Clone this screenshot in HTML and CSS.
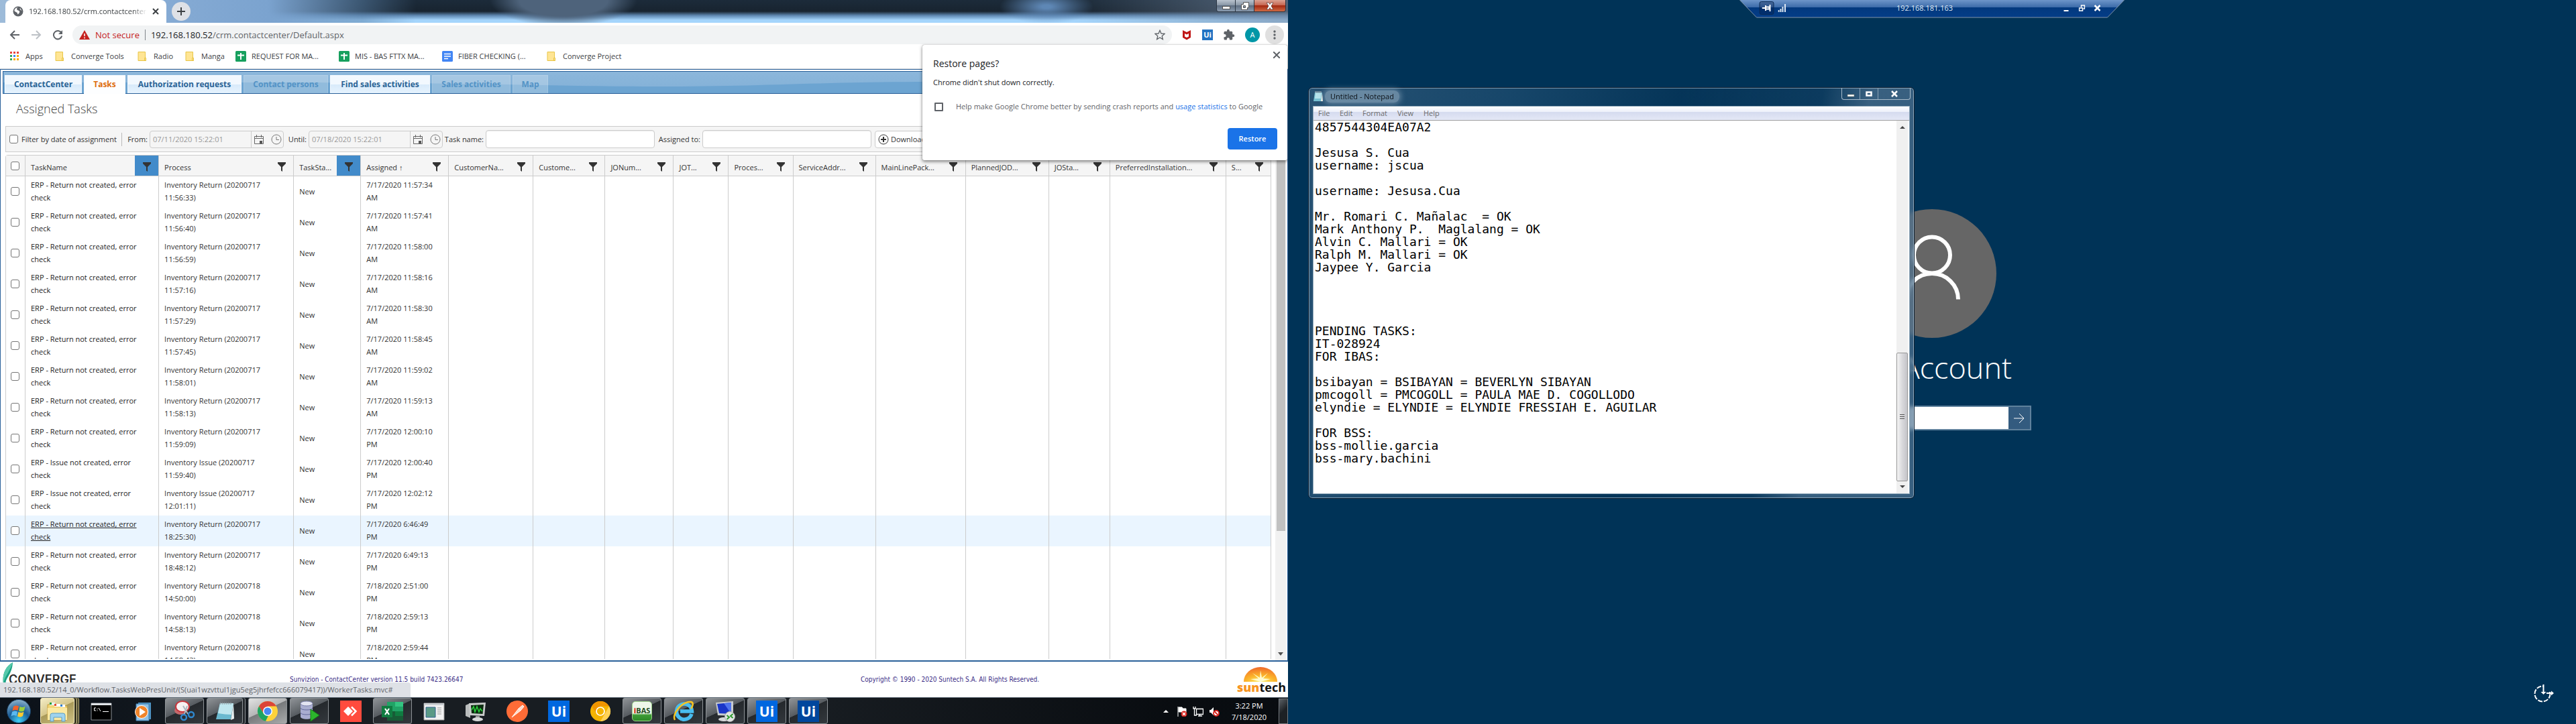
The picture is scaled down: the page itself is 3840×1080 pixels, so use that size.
FILE: index.html
```html
<!DOCTYPE html>
<html lang="en">
<head>
<meta charset="utf-8">
<title>Desktop</title>
<link rel="stylesheet" href="styles.css">
</head>
<body>
<svg class="sprite" aria-hidden="true">
  <symbol id="funnel" viewBox="0 0 12 14"><path d="M0 0h12v2L7 7v7l-2-1.500V7L0 2z" fill="#333"/></symbol>
  <symbol id="calendar" viewBox="0 0 16 16"><path d="M1.500 3.500h13v11h-13zM1 6.500h14M4.500 1v4M11.500 1v4" fill="none" stroke="#666"/><path d="M9 10h4v4H9z" fill="#555"/></symbol>
  <symbol id="clock" viewBox="0 0 16 16"><circle cx="8" cy="8" r="7" fill="none" stroke="#777"/><path d="M8 4v4.500h4" fill="none" stroke="#777"/></symbol>
  <symbol id="folder" viewBox="0 0 16 16"><path d="M1 1.500h10.500v9h1v4H1z" fill="#ffe594" stroke="#e8c547"/><path d="M10.500 14v-3.500h2V14z" fill="#ffe594" stroke="#e8c547"/></symbol>
  <symbol id="sheet" viewBox="0 0 16 16"><rect width="16" height="16" rx="1.500" fill="#17a05e"/><path d="M8 3v10M3 6.500h10" stroke="#fff" stroke-width="2"/></symbol>
</svg>

<main class="desktop">
  <section class="screen" aria-label="Browser">
    <div class="browser">
      <div class="tabstrip">
        <div class="browser-tab">
          <svg class="i16" viewBox="0 0 16 16"><circle cx="8" cy="8" r="7.500" fill="#5f6368"/><path d="M8 2c-3 1-2 4 0 4.500s3 2 1.500 4S7 13 7 11 3 9 2.500 7 5 2 8 2zM11 3c-1 1 0 3 2.500 4" fill="#fff"/></svg>
          <span class="browser-tab-title">192.168.180.52/crm.contactcenter</span>
          <button class="plain" aria-label="Close tab"><svg class="i10" viewBox="0 0 10 10"><path d="M1 1l8 8M9 1L1 9" stroke="#3c4043" stroke-width="2"/></svg></button>
        </div>
        <button class="newtab" aria-label="New tab"><svg class="i12" viewBox="0 0 12 12"><path d="M6 0v12M0 6h12" stroke="#3c4043" stroke-width="2"/></svg></button>
        <div class="winbtns">
          <button class="wb" aria-label="Minimize"><svg viewBox="0 0 14 12"><rect x="1.500" y="6.500" width="11" height="4" fill="#fff" stroke="#555"/></svg></button>
          <button class="wb" aria-label="Restore"><svg viewBox="0 0 14 12"><path d="M4.500.500h8v8h-2v3h-9v-8h3z" fill="#fff" stroke="#555"/><path d="M4.500 5.500h3v3h-3z" fill="#8297ad" stroke="#555"/></svg></button>
          <button class="wb wb-close" aria-label="Close"><svg viewBox="0 0 14 12"><path d="M2 1h3.500L7 3.500 8.500 1H12L9 6l3 5H8.500L7 8.500 5.500 11H2l3-5z" fill="#fff" stroke="#533" stroke-width=".7"/></svg></button>
        </div>
      </div>

      <div class="navbar">
        <button class="plain nav" aria-label="Back"><svg class="i16" viewBox="0 0 16 16"><path d="M15 8H2M8 2L2 8l6 6" fill="none" stroke="#5f6368" stroke-width="2"/></svg></button>
        <button class="plain nav" aria-label="Forward"><svg class="i16" viewBox="0 0 16 16"><path d="M1 8h13M8 2l6 6-6 6" fill="none" stroke="#bdc1c6" stroke-width="2"/></svg></button>
        <button class="plain nav" aria-label="Reload"><svg class="i16" viewBox="0 0 16 16"><path d="M13.500 5A6.200 6.200 0 1 0 14.200 9.500" fill="none" stroke="#5f6368" stroke-width="2"/><path d="M15 1v6H9z" fill="#5f6368"/></svg></button>
        <div class="omnibox">
          <svg class="i16" viewBox="0 0 16 16"><path d="M8 1l8 14H0z" fill="#c5221f"/><path d="M8 6v4M8 11.500v2" stroke="#fff" stroke-width="1.500"/></svg>
          <span class="insecure">Not secure</span>
          <span class="url">192.168.180.52<span class="path">/crm.contactcenter/Default.aspx</span></span>
          <button class="plain star" aria-label="Bookmark"><svg class="i16" viewBox="0 0 24 24"><path d="M12 2l3 7 7.500.600-5.700 5 1.700 7.400-6.500-4-6.500 4 1.700-7.400-5.700-5L9 9z" fill="none" stroke="#5f6368" stroke-width="2"/></svg></button>
        </div>
        <div class="extensions">
          <svg class="i16" viewBox="0 0 16 16"><path d="M2 1l6 3 6-3v11l-6 3.500L2 12zM5 6v4.500L8 12l3-1.500V6L8 7.500z" fill="#c01818" fill-rule="evenodd"/></svg>
          <span class="ui-small">Ui</span>
          <svg class="i18" viewBox="0 0 24 24"><path d="M20.500 11H19V7a2 2 0 0 0-2-2h-4V3.500a2.500 2.500 0 0 0-5 0V5H4a2 2 0 0 0-2 2v3.800h1.500a2.700 2.700 0 0 1 0 5.400H2V20a2 2 0 0 0 2 2h3.800v-1.500a2.700 2.700 0 0 1 5.400 0V22H17a2 2 0 0 0 2-2v-4h1.500a2.500 2.500 0 0 0 0-5z" fill="#5f6368"/></svg>
          <span class="profile">A</span>
        </div>
        <button class="menu" aria-label="Menu"><svg class="i16" viewBox="0 0 16 16"><g fill="#5f6368"><circle cx="8" cy="3" r="1.700"/><circle cx="8" cy="8" r="1.700"/><circle cx="8" cy="13" r="1.700"/></g></svg></button>
      </div>

      <nav class="bookmarks">
        <a href="#"><svg class="i16" viewBox="0 0 16 16"><g><path d="M1 1h3v3H1z M6 1h3v3H6zM11 1h3v3h-3z" fill="#e8453c"/><path d="M1 6h3v3H1zM1 11h3v3H1z" fill="#34a853"/><path d="M6 6h3v3H6z" fill="#4285f4"/><path d="M11 6h3v3h-3zM6 11h3v3H6zM11 11h3v3h-3z" fill="#f9ab00"/></g></svg>Apps</a>
        <a href="#"><svg class="i16"><use href="#folder"/></svg>Converge Tools</a>
        <a href="#"><svg class="i16"><use href="#folder"/></svg>Radio</a>
        <a href="#"><svg class="i16"><use href="#folder"/></svg>Manga</a>
        <a href="#"><svg class="i16"><use href="#sheet"/></svg>REQUEST FOR MA...</a>
        <a href="#"><svg class="i16"><use href="#sheet"/></svg>MIS - BAS FTTX MA...</a>
        <a href="#"><svg class="i16" viewBox="0 0 16 16"><rect width="16" height="16" rx="1.500" fill="#4285f4"/><path d="M3 4.500h10M3 8h10M3 11.500h6" stroke="#fff" stroke-width="1.700"/></svg>FIBER CHECKING (...</a>
        <a href="#"><svg class="i16"><use href="#folder"/></svg>Converge Project</a>
      </nav>

      <div class="crm">
        <nav class="crm-tabs">
          <svg class="wave" viewBox="0 0 1910 32" preserveAspectRatio="none"><path d="M0 16h400c300 0 420 6 580 6S1200 15 1400 15h510v17H0z" fill="#6ca4d1"/></svg>
          <a href="#" class="crm-tab">ContactCenter</a>
          <a href="#" class="crm-tab active">Tasks</a>
          <a href="#" class="crm-tab">Authorization requests</a>
          <a href="#" class="crm-tab off">Contact persons</a>
          <a href="#" class="crm-tab">Find sales activities</a>
          <a href="#" class="crm-tab off">Sales activities</a>
          <a href="#" class="crm-tab off">Map</a>
        </nav>
        <div class="crm-body">
          <div class="crm-content">
            <h1>Assigned Tasks</h1>
            <form class="filters">
              <div class="bydate"><input type="checkbox" class="cb" id="bydate"><label for="bydate">Filter by date of assignment</label></div>
              <label for="from">From:</label>
              <div class="datebox"><input id="from" type="text" value="07/11/2020 15:22:01" disabled><span><svg class="i16"><use href="#calendar"/></svg><svg class="i16"><use href="#clock"/></svg></span></div>
              <label for="until">Until:</label>
              <div class="datebox"><input id="until" type="text" value="07/18/2020 15:22:01" disabled><span><svg class="i16"><use href="#calendar"/></svg><svg class="i16"><use href="#clock"/></svg></span></div>
              <label for="taskname">Task name:</label>
              <input class="textbox" id="taskname" type="text">
              <label for="assignee">Assigned to:</label>
              <input class="textbox" id="assignee" type="text">
              <button type="button" class="download"><svg class="i16" viewBox="0 0 16 16"><circle cx="8" cy="8" r="7" fill="none" stroke="#333"/><path d="M8 4v8M4 8h8" stroke="#333" stroke-width="2"/></svg>Download</button>
            </form>
            <div class="grid-wrap">
              <table class="grid">
                <colgroup><col class="c-check"><col class="c-task"><col class="c-process"><col class="c-state"><col class="c-assigned"><col class="c-customer"><col class="c-custno"><col class="c-jonum"><col class="c-jot"><col class="c-proc"><col class="c-addr"><col class="c-pack"><col class="c-planned"><col class="c-josta"><col class="c-pref"><col class="c-s"></colgroup>
                <thead><tr id="head"></tr></thead>
                <tbody id="rows"></tbody>
              </table>
            </div>
          </div>
          <div class="page-scroll"><div class="page-thumb"></div><svg viewBox="0 0 10 6"><path d="M1 0h8L5 5z" fill="#505050"/></svg></div>
        </div>
      </div>

      <footer class="crm-footer">
        <div class="converge"><svg viewBox="0 0 17 34"><path d="M17 0C6 6 1 18 3 32l4 2C4 24 16 20 17 0z" fill="#1aa184"/><path d="M17 0C6 6 1 18 3 32 5 20 14 12 17 0z" fill="#56c9ab"/></svg><span>CONVERGE</span></div>
        <p class="version">Sunvizion - ContactCenter version 11.5 build 7423.26647</p>
        <p class="copyright">Copyright © 1990 - 2020 Suntech S.A. All Rights Reserved.</p>
        <div class="suntech">
          <svg viewBox="0 0 50 22"><defs><radialGradient id="sun" cx=".5" cy="1" r="1"><stop offset="0" stop-color="#fff36b"/><stop offset=".45" stop-color="#fbb12a"/><stop offset="1" stop-color="#f0682a"/></radialGradient></defs><path d="M0 22a25 22 0 0 1 50 0z" fill="url(#sun)"/><path d="M25 22L10 18l12-1-9-8 11 7 1-11 2 11 9-7-7 8 11 1z" fill="#fffbd0"/></svg>
          <span><b>sun</b>tech</span>
        </div>
        <div class="status">192.168.180.52/14_0/Workflow.TasksWebPresUnit/(S(uai1wzvttul1jgu5eg5jhrfefcc666079417))/WorkerTasks.mvc#</div>
      </footer>

      <div class="restore" role="dialog" aria-labelledby="restore-title">
        <button class="plain restore-close" aria-label="Dismiss"><svg class="i10" viewBox="0 0 10 10"><path d="M0 0l10 10M10 0L0 10" stroke="#5f6368" stroke-width="2"/></svg></button>
        <h2 id="restore-title">Restore pages?</h2>
        <p>Chrome didn't shut down correctly.</p>
        <div class="consent"><input type="checkbox" id="crash" class="cb square"><label for="crash">Help make Google Chrome better by sending crash reports and <a href="#">usage statistics</a> to Google</label></div>
        <button class="restore-btn">Restore</button>
      </div>
    </div>

    <div class="taskbar">
      <button class="start" aria-label="Start"><svg viewBox="0 0 36 36"><defs><radialGradient id="orb" cx=".5" cy=".9" r=".9"><stop offset="0" stop-color="#3fd0f5"/><stop offset=".5" stop-color="#1a5d97"/><stop offset="1" stop-color="#8fb3cc"/></radialGradient></defs><circle cx="18" cy="18" r="17.500" fill="url(#orb)" stroke="#173a5c"/><path d="M10 11c3-2 5-2 8-.5L16.500 17c-3-1.500-5-1.500-8 .500z" fill="#f2622a"/><path d="M19.500 11c3 1.500 5 1.500 8-.5L26 17c-3 2-5 2-8 .5z" fill="#9bcf3c"/><path d="M8 19c3-2 5-2 8-.5L14.500 25c-3-1.500-5-1.500-8 .5z" fill="#5cb8ee"/><path d="M17.500 19c3 1.500 5 1.500 8-.5L24 25c-3 2-5 2-8 .5z" fill="#ffc931"/></svg></button>
      <button class="app open gold stacked" aria-label="Explorer"><svg viewBox="0 0 32 32"><path d="M1 6h10l2 2h17v21H1z" fill="#f3d677" stroke="#c9a23c"/><path d="M4 3h8v4H4z" fill="#e9f3fa"/><path d="M4 3h3v3H4z" fill="#21a038"/><path d="M11 5h9v4h-9z" fill="#fff"/><path d="M11 5h3v3h-3z" fill="#e0482e"/><path d="M20 6h7v4h-7z" fill="#fff"/><path d="M20 6h3v3h-3z" fill="#2f7fd0"/><path d="M1 11h29v18H1z" fill="#fbe9a2"/><path d="M5 31V22q0-3 3-3h16q3 0 3 3v9h-5v-6H10v6z" fill="#9fd3ee" stroke="#5a9ec4"/></svg></button>
      <button class="app" aria-label="Command Prompt"><svg viewBox="0 0 32 32"><path d="M1 4h30v25H1z" fill="#000" stroke="#8a8f94"/><path d="M1 4h30v3H1z" fill="#dfe3e6"/><path d="M8 11H5.500v4H8M10 12v1M10 14.500v1M12 11l3 5M18 16.500h9" fill="none" stroke="#fff"/></svg></button>
      <button class="app" aria-label="Media Player"><svg viewBox="0 0 32 32"><path d="M9 3h19v25H9z" fill="#4e93c4"/><path d="M6 5h19v25H6z" fill="#8fc1e6" stroke="#3c7cae"/><circle cx="14" cy="17" r="9.500" fill="#f0842a" stroke="#fff"/><path d="M11 11l9 6-9 6z" fill="#fff"/></svg></button>
      <button class="app open" aria-label="Snipping Tool"><svg viewBox="0 0 32 32"><ellipse cx="10" cy="15" rx="9" ry="6" fill="#c5686b"/><ellipse cx="13" cy="9" rx="10" ry="8" fill="#f7f2f2" stroke="#c9353c" stroke-width="2"/><path d="M14 8l7 12M20 8l-4 12" stroke="#aeb8c0" stroke-width="2"/><circle cx="15" cy="25" r="4" fill="none" stroke="#2f88cf" stroke-width="2.500"/><circle cx="26" cy="21" r="4" fill="none" stroke="#2f88cf" stroke-width="2.500"/></svg></button>
      <button class="app open stacked2" aria-label="Notepad"><svg viewBox="0 0 32 32"><path d="M9 4h20l-4 24H3z" fill="#6bb9cf"/><path d="M9 4h20l-3 17q-9 0-20-2z" fill="#bfe6ee"/><path d="M29 5l1 22-5 2z" fill="#e8efef"/><path d="M10 2v4M13 2v4M16 2v4M19 2v4M22 2v4M25 2v4" stroke="#8a969b"/></svg></button>
      <button class="app open bright" aria-label="Chrome"><svg viewBox="0 0 32 32"><circle cx="16" cy="16" r="15" fill="#fdd23a"/><path d="M3 8.500a15 15 0 0 1 26 0H16l-6 11z" fill="#db4437"/><path d="M3 8.500l7 11 7 3-4 8.300A15 15 0 0 1 3 8.500z" fill="#1da462"/><circle cx="16" cy="16" r="7" fill="#fff"/><circle cx="16" cy="16" r="5.500" fill="#4688f1"/></svg></button>
      <button class="app open" aria-label="Database"><svg viewBox="0 0 32 32"><path d="M3 4v20c0 5 18 5 18 0V4z" fill="#a9add0"/><ellipse cx="12" cy="4.500" rx="9" ry="3.500" fill="#e3e4f2" stroke="#7b80ab"/><path d="M3 11c0 4 18 4 18 0M3 18c0 4 18 4 18 0" fill="none" stroke="#63689a"/><path d="M18 13l13 9-13 9z" fill="#2cb52c" stroke="#157a15"/></svg></button>
      <button class="app" aria-label="AnyDesk"><svg viewBox="0 0 32 32"><path d="M0 0h32v32H0z" fill="#ff4b3e"/><path d="M12 9l7 7-7 7-7-7z" fill="#fff"/><path d="M17 9.500l6.500 6.500-6.500 6.500" fill="none" stroke="#fff" stroke-width="2.500"/></svg></button>
      <button class="app open" aria-label="Excel"><svg viewBox="0 0 32 32"><path d="M8 2h12v14H8z" fill="#21a366"/><path d="M20 2h12v7H20z" fill="#33c481"/><path d="M20 9h12v7H20z" fill="#21a366"/><path d="M8 16h12v14H8z" fill="#185c37"/><path d="M20 16h12v7H20z" fill="#107c41"/><path d="M20 23h12v7H20z" fill="#185c37"/><path d="M0 8h16v17H0z" fill="#107c41"/><path d="M5 12l6 9M11 12l-6 9" stroke="#fff" stroke-width="2.200"/></svg></button>
      <button class="app" aria-label="Window"><svg viewBox="0 0 32 32"><path d="M1 4h30v25H1z" fill="#f2f2f2" stroke="#999"/><path d="M1 4h30v3H1z" fill="#c9ced2"/><path d="M4 10h14v15H4z" fill="#5a9a86" stroke="#30608f"/><path d="M21 11h6M21 14h6M21 17h6M21 20h6" stroke="#999"/></svg></button>
      <button class="app" aria-label="System monitor"><svg viewBox="0 0 32 32"><path d="M1 7l7-3v22l-7-3z" fill="#b9bcbc"/><path d="M6 4l25-1-2 20-22-1z" fill="#c9cbcb"/><path d="M9 7l19-1-1.500 14L10 19z" fill="#0c2c10"/><path d="M10 14l3-5 2 8 3-8 3 8 2-5 3 4" fill="none" stroke="#2ad13b" stroke-width="1.500"/><path d="M16 23h6v4h-6z" fill="#999"/><ellipse cx="19" cy="28" rx="8" ry="3" fill="#d6d8d8"/></svg></button>
      <button class="app" aria-label="Postman"><svg viewBox="0 0 32 32"><circle cx="16" cy="16" r="16" fill="#ff6c37"/><path d="M8 25l10-13 3 3zM18 12l6-5 2 2-5 6z" fill="#ffd9c9" stroke="#fff"/></svg></button>
      <button class="app" aria-label="UiPath"><span class="ui-logo">Ui</span></button>
      <button class="app" aria-label="Canary"><svg viewBox="0 0 32 32"><circle cx="16" cy="16" r="15" fill="#f4b400"/><path d="M3 8.500a15 15 0 0 1 26 0H16l-6 11z" fill="#ef9400"/><path d="M16 31l7-12 6-10.500A15 15 0 0 1 16 31z" fill="#ffd257"/><circle cx="16" cy="16" r="6" fill="#f4b400" stroke="#fff" stroke-width="1.700"/></svg></button>
      <button class="app open" aria-label="iBAS"><span class="ibas"><b>i</b>BAS</span></button>
      <button class="app open" aria-label="Internet Explorer"><svg viewBox="0 0 32 32"><path d="M28 20A11.500 11.500 0 1 1 28.500 16H11" fill="none" stroke="#48bdf0" stroke-width="5.500"/><path d="M3 29C-2 20 14 1 27 2c5 1 2 8 0 10" fill="none" stroke="#f8c421" stroke-width="2.500"/></svg></button>
      <button class="app open" aria-label="Remote Desktop"><svg viewBox="0 0 32 32"><path d="M2 3l26-2v22L5 22z" fill="#c9cccf"/><path d="M4 5l21-2v17L7 19z" fill="#1a36c8"/><path d="M14 4l11-1v17z" fill="#4f74ee"/><ellipse cx="14" cy="28" rx="8" ry="3" fill="#d6d8da"/><circle cx="23" cy="24" r="7.500" fill="#e2e5e5" stroke="#aaa"/><path d="M18.500 22l3.500 3-3.500 3M27.500 20l-3.500 3 3.500 3" fill="none" stroke="#2c9b2c" stroke-width="2"/></svg></button>
      <button class="app open" aria-label="UiPath Studio"><span class="ui-logo">Ui</span></button>
      <button class="app open" aria-label="UiPath Robot"><span class="ui-logo dark">Ui</span></button>
      <div class="tray">
        <svg viewBox="0 0 16 16"><path d="M4 10h8L8 6z" fill="#fff"/></svg>
        <svg viewBox="0 0 16 16"><path d="M2 1v15M3 2h5l1 2h5v6H8L7 9H3z" stroke="#fff" fill="#fff"/><circle cx="11" cy="12" r="4.500" fill="#d8221c"/><path d="M9 10l4 4M13 10l-4 4" stroke="#fff" stroke-width="1.500"/></svg>
        <svg viewBox="0 0 16 16"><path d="M5.500 4.500h10v8h-10zM8 15h6M10.500 12v3M1 1v3h3V1M2.500 4v10H6" fill="none" stroke="#fff" stroke-width="1.300"/></svg>
        <svg viewBox="0 0 16 16"><path d="M1 6h2l4-4v12l-4-4H1z" fill="#fff"/><circle cx="11" cy="11" r="4" fill="#fff" stroke="#d8221c" stroke-width="1.800"/><path d="M8 8l6 6" stroke="#d8221c" stroke-width="1.800"/></svg>
        <time class="clock">3:22 PM<br>7/18/2020</time>
        <button class="showdesk" aria-label="Show desktop"></button>
      </div>
    </div>
  </section>

  <section class="screen remote" aria-label="Remote session">
    <div class="login">
      <svg class="avatar" viewBox="0 0 192 192"><circle cx="96" cy="96" r="96" fill="#666"/><circle cx="96" cy="68.500" r="27" fill="none" stroke="#fff" stroke-width="6"/><path d="M57 134.500a39 38.500 0 0 1 78 0" fill="none" stroke="#fff" stroke-width="6"/></svg>
      <div class="account">Account</div>
      <div class="password"><input type="password" aria-label="Password"><button aria-label="Submit"><svg class="i16" viewBox="0 0 16 16"><path d="M0 8h15M8 1l7 7-7 7" fill="none" stroke="#fff"/></svg></button></div>
    </div>
    <button class="ease" aria-label="Ease of Access"><svg viewBox="0 0 32 28"><circle cx="14" cy="15" r="11.500" fill="none" stroke="#fff" stroke-width="2" stroke-dasharray="7 2" pathLength="72"/><path d="M15 2h12v10H15z" fill="#003357"/><path d="M15.500 1v13M20 14h10" stroke="#fff" stroke-width="2"/><path d="M11.500 12h8l-4 4zM27 10.500l4 3.500-4 3.500z" fill="#fff"/></svg></button>

    <div class="rdp">
      <svg class="rdp-bg" viewBox="0 0 575 27" preserveAspectRatio="none"><defs><linearGradient id="rdpg" x2="0" y2="1"><stop offset="0" stop-color="#7299cc"/><stop offset=".45" stop-color="#3a69a8"/><stop offset=".46" stop-color="#03397e"/><stop offset="1" stop-color="#043d88"/></linearGradient></defs><path d="M0-1l26 27h523l26-27z" fill="url(#rdpg)" stroke="#8093a8"/></svg>
      <button class="pin" aria-label="Pin"><svg viewBox="0 0 14 12"><path d="M0 6h5M5.500 2v8M6 4.500h5v3H6M12 1v10" stroke="#fff" stroke-width="2" fill="none"/></svg></button>
      <svg class="signal" viewBox="0 0 12 12"><path d="M1 12V9M4 12V7M7 12V4M10.500 12V0" stroke="#dfe8f3" stroke-width="2"/></svg>
      <span class="host">192.168.181.163</span>
      <button class="plain" aria-label="Minimize"><svg class="i10" viewBox="0 0 10 10"><path d="M1 9h7" stroke="#fff" stroke-width="2"/></svg></button>
      <button class="plain" aria-label="Restore"><svg class="i10" viewBox="0 0 10 10"><path d="M1 5h5v4H1zM4 4V1h5v5H7" fill="none" stroke="#fff" stroke-width="1.500"/></svg></button>
      <button class="plain" aria-label="Close"><svg class="i10" viewBox="0 0 10 10"><path d="M1 1l8 8M9 1L1 9" stroke="#fff" stroke-width="2.500"/></svg></button>
    </div>

    <div class="notepad">
      <div class="np-title">
        <svg class="i16" viewBox="0 0 16 16"><path d="M3 2h11l-1 13H1z" fill="#76c0d2"/><path d="M4 3h9l-1 8H3z" fill="#b5e3ec"/><path d="M14 3l1 12h-3z" fill="#f3f3ea"/><path d="M4 0v3M6 0v3M8 0v3M10 0v3M12 0v3" stroke="#b9c3c6"/></svg>
        <span>Untitled - Notepad</span>
        <div class="np-btns">
          <button aria-label="Minimize"><svg viewBox="0 0 12 10"><path d="M1 6h10v3H1z" fill="#fff" stroke="#665" stroke-width=".5"/></svg></button>
          <button aria-label="Maximize"><svg viewBox="0 0 12 10"><path d="M2.500 2.500h7v5h-7z" fill="none" stroke="#fff" stroke-width="2.500"/></svg></button>
          <button class="np-close" aria-label="Close"><svg viewBox="0 0 12 10"><path d="M2 1l8 8M10 1L2 9" stroke="#fff" stroke-width="2.500"/></svg></button>
        </div>
      </div>
      <div class="np-client">
        <div class="np-menu"><span>File</span><span>Edit</span><span>Format</span><span>View</span><span>Help</span></div>
        <div class="np-edit">
<textarea class="np-text" aria-label="Text editor" spellcheck="false">4857544304EA07A2

Jesusa S. Cua
username: jscua

username: Jesusa.Cua

Mr. Romari C. Mañalac  = OK
Mark Anthony P.  Maglalang = OK
Alvin C. Mallari = OK
Ralph M. Mallari = OK
Jaypee Y. Garcia




PENDING TASKS:
IT-028924
FOR IBAS:

bsibayan = BSIBAYAN = BEVERLYN SIBAYAN
pmcogoll = PMCOGOLL = PAULA MAE D. COGOLLODO
elyndie = ELYNDIE = ELYNDIE FRESSIAH E. AGUILAR

FOR BSS:
bss-mollie.garcia
bss-mary.bachini</textarea>
          <div class="np-scroll"><svg viewBox="0 0 8 5"><path d="M0 5h8L4 1z" fill="#444"/></svg><div class="np-track"><div class="np-thumb"><i></i></div></div><svg viewBox="0 0 8 5"><path d="M0 0h8L4 4z" fill="#444"/></svg></div>
        </div>
      </div>
    </div>
  </section>
</main>
<script src="grid.js"></script>
</body>
</html>
```
FILE: grid.js
```js
const columns = [
  ["TaskName", true], ["Process"], ["TaskSta...", true], ["Assigned ↑"], ["CustomerNa..."],
  ["Custome..."], ["JONum..."], ["JOT..."], ["Proces..."], ["ServiceAddr..."],
  ["MainLinePack..."], ["PlannedJOD..."], ["JOSta..."], ["PreferredInstallation..."], ["S..."]
];
const tasks = [
  ["Return", "20200717 11:56:33", "7/17/2020 11:57:34 AM"],
  ["Return", "20200717 11:56:40", "7/17/2020 11:57:41 AM"],
  ["Return", "20200717 11:56:59", "7/17/2020 11:58:00 AM"],
  ["Return", "20200717 11:57:16", "7/17/2020 11:58:16 AM"],
  ["Return", "20200717 11:57:29", "7/17/2020 11:58:30 AM"],
  ["Return", "20200717 11:57:45", "7/17/2020 11:58:45 AM"],
  ["Return", "20200717 11:58:01", "7/17/2020 11:59:02 AM"],
  ["Return", "20200717 11:58:13", "7/17/2020 11:59:13 AM"],
  ["Return", "20200717 11:59:09", "7/17/2020 12:00:10 PM"],
  ["Issue", "20200717 11:59:40", "7/17/2020 12:00:40 PM"],
  ["Issue", "20200717 12:01:11", "7/17/2020 12:02:12 PM"],
  ["Return", "20200717 18:25:30", "7/17/2020 6:46:49 PM", true],
  ["Return", "20200717 18:48:12", "7/17/2020 6:49:13 PM"],
  ["Return", "20200718 14:50:00", "7/18/2020 2:51:00 PM"],
  ["Return", "20200718 14:58:13", "7/18/2020 2:59:13 PM"],
  ["Return", "20200718 14:58:43", "7/18/2020 2:59:44 PM"]
];

// Puts the last word of a cell on its second line.
const twoLines = (text) => text.replace(/ (\S+)$/, "<br>$1");

document.getElementById("head").innerHTML =
  '<th><input type="checkbox" class="cb" aria-label="Select all"></th>' +
  columns.map(([name, on]) =>
    `<th><div class="th"><span>${name}</span><button class="filter${on ? " on" : ""}" aria-label="Filter"><svg><use href="#funnel"/></svg></button></div></th>`
  ).join("");

document.getElementById("rows").innerHTML = tasks.map(([kind, stamp, assigned, hover]) =>
  `<tr${hover ? ' class="hover"' : ""}><td><input type="checkbox" class="cb" aria-label="Select task"></td>` +
  `<td><a href="#">ERP - ${kind} not created, error<br>check</a></td>` +
  `<td>${twoLines(`Inventory ${kind} (${stamp})`)}</td><td>New</td><td>${twoLines(assigned)}</td>` +
  "<td></td>".repeat(11) + "</tr>"
).join("");
```
FILE: styles.css
```css
* { box-sizing: border-box; }
body { margin: 0; font: 11px/16px "Open Sans", "Noto Sans", sans-serif; color: #333; background: #003357; }
button, input, textarea { font: inherit; color: inherit; margin: 0; }
h1, h2, p { margin: 0; font-weight: 400; }
a { color: inherit; text-decoration: none; }
button { padding: 0; border: 0; background: none; }
svg { display: block; flex: none; }
.sprite { position: absolute; width: 0; height: 0; }
.i10 { width: 10px; height: 10px; }
.i12 { width: 12px; height: 12px; }
.i16 { width: 16px; height: 16px; }
.i18 { width: 18px; height: 18px; }
.plain { display: flex; align-items: center; justify-content: center; }

.desktop { display: flex; height: 100vh; }
.screen { flex: 1; min-width: 0; display: flex; flex-direction: column; position: relative; overflow: hidden; }
.browser { flex: 1; min-height: 0; display: flex; flex-direction: column; position: relative; background: #fff; }

/* Browser chrome */
.tabstrip {
  display: flex; height: 34px; padding-left: 8px; flex: none;
  background:
    linear-gradient(90deg, #9dbbd9 0, #86abd4 240px, #7ba3cf 400px, rgba(90, 130, 170, .5) 540px, transparent 620px),
    radial-gradient(ellipse 110px 40px at 840px 0, #4e637b 60%, transparent 100%),
    radial-gradient(ellipse 70px 26px at 1560px 10px, #5e87b5 10%, transparent 100%),
    linear-gradient(90deg, transparent 1600px, rgba(120, 140, 165, .6) 1900px),
    linear-gradient(#1c2b3a 0, #182430 50%, #5f88b2 68%, #a5d5fc 88%);
}
.browser-tab { width: 240px; display: flex; align-items: center; padding: 0 11px; gap: 8px; background: #fff; border-radius: 8px 8px 0 0; color: #3c4043; }
.browser-tab-title { flex: 1; overflow: hidden; white-space: nowrap; mask-image: linear-gradient(90deg, #000 88%, transparent); }
.newtab { width: 28px; height: 28px; margin: 3px 0 0 8px; border-radius: 50%; background: #dee1e6; display: flex; align-items: center; justify-content: center; }
.winbtns { display: flex; margin: 0 3px 0 auto; height: 18px; border: 1px solid #2c3744; border-top: 0; border-radius: 0 0 4px 4px; overflow: hidden; }
.wb { width: 28px; display: flex; align-items: center; justify-content: center; border-right: 1px solid #2c3744; background: linear-gradient(#b9c3ce, #8492a2 50%, #5f6f82 50%, #8b9cb0); }
.wb svg { width: 14px; height: 12px; }
.wb-close { width: 46px; border-right: 0; background: linear-gradient(#dba293, #c4604a 50%, #a42a12 50%, #cf6a45); }
.navbar { height: 36px; flex: none; display: flex; align-items: center; padding: 0 6px 0 6px; }
.nav { width: 32px; height: 32px; }
.omnibox { flex: 1; height: 28px; margin: 0 14px 0 6px; padding: 0 10px; border-radius: 14px; background: #f1f3f4; display: flex; align-items: center; gap: 8px; font-size: 13px; line-height: 18px; }
.insecure { color: #c5221f; padding-right: 8px; border-right: 1px solid #80868b; line-height: 16px; }
.url { color: #202124; }
.path { color: #5f6368; }
.star { margin-left: auto; }
.extensions { display: flex; align-items: center; gap: 15px; }
.ui-small { width: 16px; height: 16px; background: #2273c2; color: #fff; font: bold 11px/16px "Open Sans", sans-serif; text-align: center; }
.profile { width: 22px; height: 22px; border-radius: 50%; background: #0097a7; color: #fff; text-align: center; line-height: 22px; }
.menu { width: 28px; height: 28px; margin-left: 8px; border-radius: 50%; background: #e0e0e0; display: flex; align-items: center; justify-content: center; }
.bookmarks { height: 33px; flex: none; border-bottom: 1px solid #dadce0; display: grid; grid-template-columns: 68px 123px 71px 75px 154px 154px 156px auto; align-items: center; padding: 0 14px 4px; color: #3c4043; }
.bookmarks a { display: flex; align-items: center; gap: 8px; white-space: nowrap; }

/* CRM page */
.crm { flex: 1; min-height: 0; display: flex; flex-direction: column; border: 1px solid #2a6099; border-bottom-width: 2px; padding-top: 2px; }
.crm-tabs { position: relative; height: 34px; flex: none; margin: 0 3px; border: 1px solid #2a6099; display: grid; grid-template-columns: 115px 62px 170px 126px 149px 117px 53px; gap: 3px; padding: 5px 0 0 2px; background: linear-gradient(#8cb7db, #82b0d7); font: bold 12px/28px "Open Sans", sans-serif; }
.wave { position: absolute; inset: 0; width: 100%; height: 100%; }
.crm-tab { position: relative; text-align: center; white-space: nowrap; color: #2a6496; background: linear-gradient(#f2f8fe 50%, #d8eafa 50%, #e6f3fe); border: 1px solid #f5faff; border-bottom: 0; line-height: 26px; }
.crm-tab.active { background: #fdfeff; color: #dd6d0e; margin-bottom: -1px; }
.crm-tab.off { background: rgba(255, 255, 255, .25); border-color: rgba(255, 255, 255, .15); color: #5393c6; }
.crm-body { flex: 1; min-height: 0; display: flex; padding-right: 2px; }
.crm-content { flex: 1; min-width: 0; display: flex; flex-direction: column; padding: 0 6px 2px 7px; }
h1 { font: 300 18px/24px "Open Sans", sans-serif; color: #444; padding: 10px 0 14px 16px; }
.filters { height: 39px; flex: none; border: 1px solid #ccc; background: #f5f5f5; display: grid; grid-template-columns: 174px 35px 200px 37px 200px 64px 252px 71px 252px 120px; align-items: center; padding-left: 5px; white-space: nowrap; }
.filters > label { text-align: right; padding-right: 3px; }
.bydate { display: flex; align-items: center; gap: 5px; width: 168px; height: 20px; border-right: 1px solid #bbb; }
.cb { appearance: none; width: 13px; height: 13px; flex: none; border: 1px solid #767676; border-radius: 3px; background: #fff; display: block; }
.square { border: 2px solid #5f6368; border-radius: 1px; }
.datebox { display: flex; height: 26px; border: 1px solid #ccc; border-radius: 4px; color: #999; }
.datebox input { width: 151px; padding: 0 4px; border: 0; border-right: 1px solid #ccc; background: none; color: #999; }
.datebox span { flex: 1; display: flex; align-items: center; justify-content: space-between; padding: 0 2px 0 3px; }
.textbox { height: 27px; border: 1px solid #ccc; border-radius: 4px; background: #fff; padding: 0 4px; box-shadow: inset 0 1px 1px rgba(0, 0, 0, .08); }
.download { height: 26px; margin-left: 5px; padding: 0 4px; border: 1px solid #ccc; border-radius: 4px; background: #fff; display: flex; align-items: center; gap: 3px; }
.grid-wrap { flex: 1; min-height: 0; margin-top: 4px; overflow: hidden; }
.grid { width: 100%; table-layout: fixed; border-collapse: separate; border-spacing: 0; border-top: 1px solid #ccc; border-left: 1px solid #ccc; border-radius: 4px 0 0 0; line-height: 19px; }
.grid th, .grid td { padding: 3px 0 5px 8px; border-right: 1px solid #ccc; text-align: left; font-weight: 400; white-space: nowrap; height: 46px; overflow: hidden; }
.grid th:first-child, .grid td:first-child { padding-left: 7px; }
.grid th { height: 31px; padding: 0 0 0 8px; background: #f5f5f5; border-bottom: 1px solid #ccc; }
.th { display: flex; height: 30px; }
.th span { flex: 1; min-width: 0; padding-top: 8px; }
.filter { width: 35px; display: flex; align-items: center; justify-content: center; padding-top: 3px; }
.filter svg { width: 12px; height: 14px; }
.on { background: #428bca; }
.hover { background: #eaf5ff; }
.hover a { text-decoration: underline; }
.grid td a { color: #222; }
.c-check { width: 29px; } .c-task { width: 199px; } .c-process { width: 201px; } .c-state { width: 100px; }
.c-assigned { width: 131px; } .c-customer { width: 126px; } .c-custno { width: 107px; } .c-jonum { width: 102px; }
.c-jot { width: 82px; } .c-proc { width: 96px; } .c-addr { width: 123px; } .c-pack { width: 134px; }
.c-planned { width: 124px; } .c-josta { width: 91px; } .c-pref { width: 173px; } .c-s { width: 67px; }
.page-scroll { width: 16px; background: #f1f1f1; display: flex; flex-direction: column; align-items: center; justify-content: space-between; padding: 17px 0 6px; }
.page-scroll svg { width: 10px; height: 6px; }
.page-thumb { width: 13px; height: 635px; background: #c1c1c1; }

.crm-footer { position: relative; height: 53px; flex: none; display: grid; grid-template-columns: 432px 851px 1fr 76px; background: #fff; color: #3b2d86; font: 10px/14px "DejaVu Sans Condensed", "DejaVu Sans", sans-serif; font-stretch: condensed; white-space: nowrap; }
.crm-footer p { padding-top: 20px; }
.converge { display: flex; padding: 1px 0 0 2px; }
.converge svg { width: 17px; height: 34px; margin-right: -6px; }
.converge span { font: 600 18px/20px Inter, sans-serif; color: #2b2b2b; padding-top: 16px; }
.suntech { padding-top: 8px; }
.suntech svg { width: 50px; height: 22px; margin-left: 10px; }
.suntech span { display: block; font: bold 18px/17px "Open Sans", sans-serif; color: #111; }
.suntech b { color: #f7941e; }
.status { position: absolute; left: 0; bottom: 0; height: 22px; width: 612px; padding-left: 5px; background: #dee1e6; border-radius: 0 4px 0 0; color: #5f6368; font: 11px/22px "Open Sans", sans-serif; }

.restore { position: absolute; top: 67px; right: 1px; width: 544px; height: 172px; padding: 18px 15px 16px 16px; display: flex; flex-direction: column; background: #fff; border-radius: 3px; box-shadow: 0 0 1px #777, 0 2px 5px rgba(0, 0, 0, .5); color: #202124; }
.restore-close { position: absolute; right: 11px; top: 10px; }
.restore h2 { font-size: 14px; line-height: 20px; }
.restore p { padding-top: 10px; }
.consent { display: flex; align-items: center; gap: 19px; padding: 20px 0 0 2px; color: #5f6368; white-space: nowrap; }
.consent a { color: #1a73e8; }
.restore-btn { align-self: flex-end; margin-top: auto; width: 74px; height: 32px; border-radius: 4px; background: #1a73e8; color: #fff; font-weight: 600; }

/* Taskbar */
.taskbar { height: 40px; flex: none; display: flex; gap: 4px; background: linear-gradient(90deg, rgba(10, 16, 24, .9), transparent 500px, transparent 1200px, rgba(5, 8, 12, .8) 1750px), #181d22; border-top: 1px solid #5f6b76; }
.start { width: 56px; display: flex; align-items: center; justify-content: center; }
.start svg { width: 36px; height: 36px; }
.app { width: 58px; display: flex; align-items: center; justify-content: center; border-radius: 3px; border: 1px solid transparent; }
.app svg { width: 32px; height: 32px; }
.open { border-color: #8d9296; background: linear-gradient(155deg, #8f9397 0, #565b60 45%, #25292d 46%, #33383d 100%); }
.bright { background: linear-gradient(155deg, #e3e3e3 0, #b4b5b6 45%, #77797b 46%, #a9abac 100%); }
.gold { background: linear-gradient(155deg, #f4ecc5 0, #d5c68a 45%, #a89959 46%, #cfc286 100%); border-color: #f2e8bd; }
.stacked { width: 51px; margin-right: 7px; box-shadow: 3px 0 0 #3a3722, 4px 0 0 #e0d49a, 6px 0 0 #3a3722, 7px 0 0 #c9bd83; }
.stacked2 { width: 54px; margin-right: 4px; box-shadow: 3px 0 0 #25292d, 4px 0 0 #8d9296; }
.ui-logo { width: 32px; height: 32px; background: #0067df; color: #fff; font: bold 21px/32px "Open Sans", sans-serif; text-align: center; }
.dark { background: #00479d; }
.ibas { width: 30px; height: 30px; border-radius: 5px; border: 1px solid #9bd18a; background: linear-gradient(#eef7ea 60%, #3d9b35 70%, #2d8a28); color: #1c4a1a; font: bold 11px/26px "Open Sans", sans-serif; text-align: center; }
.ibas b { color: #d2341e; }
.tray { margin-left: auto; display: flex; align-items: center; gap: 8px; color: #fff; }
.tray svg { width: 16px; height: 16px; }
.clock { width: 72px; text-align: center; line-height: 17px; }
.showdesk { width: 14px; height: 38px; border: 1px solid #777c82; background: linear-gradient(135deg, #5c6166, #1d2125 50%); }

/* Remote session */
.remote { background: #003357; }
.login { display: flex; flex-direction: column; align-items: center; padding-top: 312px; }
.avatar { width: 192px; height: 192px; }
.account { width: 238px; padding-top: 14px; text-align: right; color: #fff; font: 300 45px/60px "Open Sans", sans-serif; }
.password { width: 296px; height: 37px; margin-top: 27px; border: 2px solid #5f819c; display: flex; }
.password input { flex: 1; min-width: 0; border: 0; background: #fff; }
.password button { width: 32px; background: #335b7f; display: flex; align-items: center; justify-content: center; }
.ease { position: absolute; right: 32px; bottom: 32px; }
.ease svg { width: 32px; height: 28px; }
.rdp { position: absolute; top: 0; left: 50%; transform: translateX(-50%); width: 575px; height: 26px; padding: 0 36px 2px 30px; display: flex; align-items: center; gap: 13px; color: #dfe8f3; }
.rdp-bg { position: absolute; inset: 0; width: 100%; height: 27px; }
.rdp > * { position: relative; }
.rdp > .rdp-bg { position: absolute; }
.pin { width: 22px; height: 20px; border: 1px solid #0a2a55; border-radius: 3px; background: rgba(0, 20, 60, .3); display: flex; align-items: center; justify-content: center; }
.pin svg { width: 14px; height: 12px; }
.signal { width: 12px; height: 12px; margin-left: -7px; }
.host { flex: 1; text-align: center; }

.notepad { position: absolute; left: 30px; top: 130px; width: 904px; height: 614px; padding: 0 6px 6px; display: flex; flex-direction: column; border: 1px solid #0a1d30; border-radius: 6px; box-shadow: inset 0 0 0 1px rgba(190, 210, 225, .6); background: linear-gradient(100deg, rgba(80, 115, 145, .5) 0, rgba(45, 90, 125, .5) 30%, rgba(10, 55, 90, .5) 55%, rgba(20, 65, 100, .6) 76%, rgba(80, 115, 145, .7) 83%); backdrop-filter: blur(3px); }
.np-title { height: 27px; flex: none; display: flex; align-items: center; gap: 2px; color: #0c1116; padding-bottom: 1px; }
.np-title > span { padding: 2px 8px; border-radius: 8px; background: rgba(150, 175, 195, .6); box-shadow: 0 0 8px 2px rgba(150, 175, 195, .6); line-height: 14px; }
.np-btns { margin: 0 -1px 0 auto; align-self: flex-start; height: 18px; display: flex; border: 1px solid #a9bccb; border-top: 0; border-radius: 0 0 4px 4px; }
.np-btns button { width: 27px; display: flex; align-items: center; justify-content: center; border-right: 1px solid #8ba2b5; }
.np-btns svg { width: 12px; height: 10px; }
.np-btns .np-close { width: 47px; border-right: 0; }
.np-client { flex: 1; min-height: 0; display: flex; flex-direction: column; border: 1px solid #8ea6b8; background: #fff; }
.np-menu { height: 21px; flex: none; display: grid; grid-template-columns: 32px 34px 52px 39px auto; padding-left: 7px; color: #6d6d6d; line-height: 20px; background: linear-gradient(#fff, #eceffa 40%, #d5dbef 42%, #e2e6f5 90%); border-bottom: 1px solid #a0a0a0; }
.np-edit { flex: 1; min-height: 0; display: flex; }
.np-text { flex: 1; min-width: 0; resize: none; overflow: hidden; border: 0; outline: 0; padding: 0 2px; background: #fff; color: #000; font: 18px/19px "DejaVu Sans Mono", monospace; white-space: pre; }
.np-scroll { width: 17px; margin-right: 2px; background: #f0f0f0; display: flex; flex-direction: column; align-items: center; gap: 6px; padding: 7px 0; }
.np-scroll svg { width: 8px; height: 5px; }
.np-track { flex: 1; width: 100%; display: flex; flex-direction: column; justify-content: flex-end; }
.np-thumb { height: 37%; border: 1px solid #979797; border-radius: 2px; background: linear-gradient(90deg, #f4f4f4, #d9d9dc 50%, #c4c4c9); display: flex; align-items: center; justify-content: center; }
.np-thumb i { width: 7px; height: 8px; background: repeating-linear-gradient(#555 0 1px, transparent 1px 3px); }
```
